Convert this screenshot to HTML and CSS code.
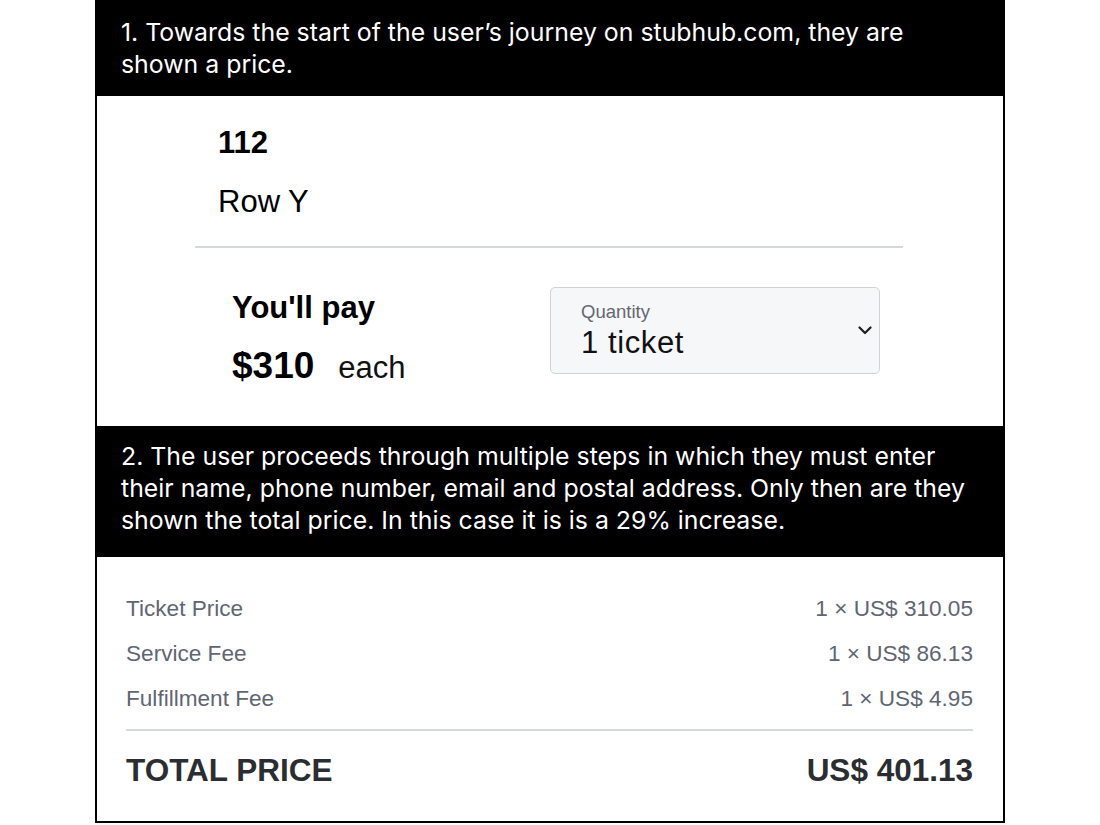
FILE: index.html
```html
<!DOCTYPE html>
<html lang="en">
<head>
<meta charset="utf-8">
<title>StubHub drip pricing</title>
<link rel="stylesheet" href="styles.css">
</head>
<body>
<main class="card">
  <header class="caption caption-first">
    1. Towards the start of the user’s journey on stubhub.com, they are<br>shown a price.
  </header>

  <section class="listing">
    <div class="listing-inner">
      <div class="section-no">112</div>
      <div class="row-name">Row Y</div>
      <div class="divider"></div>
      <div class="price-row">
        <div class="pay">
          <div class="pay-label">You'll pay</div>
          <div class="pay-amount"><span class="amount">$310</span><span class="each">each</span></div>
        </div>
        <div class="quantity">
          <div class="quantity-text">
            <div class="quantity-label">Quantity</div>
            <div class="quantity-value">1 ticket</div>
          </div>
          <svg class="chevron" width="14" height="9" viewBox="0 0 14 9" aria-hidden="true">
            <polyline points="1.5,1.5 7,7 12.5,1.5" fill="none" stroke="#1e1e1e" stroke-width="2.2" stroke-linecap="round" stroke-linejoin="round"/>
          </svg>
        </div>
      </div>
    </div>
  </section>

  <header class="caption caption-second">
    2. The user proceeds through multiple steps in which they must enter<br>their name, phone number, email and postal address. Only then are they<br>shown the total price. In this case it is is a 29% increase.
  </header>

  <section class="summary">
    <div class="fee-row"><span>Ticket Price</span><span>1 × US$ 310.05</span></div>
    <div class="fee-row"><span>Service Fee</span><span>1 × US$ 86.13</span></div>
    <div class="fee-row"><span>Fulfillment Fee</span><span>1 × US$ 4.95</span></div>
    <div class="summary-divider"></div>
    <div class="total-row"><span>TOTAL PRICE</span><span>US$ 401.13</span></div>
  </section>
</main>
</body>
</html>
```

FILE: styles.css
```css
* {
  box-sizing: border-box;
}

html, body {
  margin: 0;
  padding: 0;
  background: #ffffff;
}

.card {
  width: 910px;
  margin-left: 95px;
  border: 2px solid #000000;
  border-top: none;
  background: #ffffff;
  font-family: "Liberation Sans", Arial, sans-serif;
}

.caption {
  background: #000000;
  color: #ffffff;
  font-family: Inter, "Noto Sans", sans-serif;
  font-size: 24.85px;
  line-height: 32px;
  margin: 0 -2px;
  padding-left: 26px;
  padding-right: 8px;
  white-space: nowrap;
}

.caption-first {
  height: 96px;
  padding-top: 16px;
}

.caption-second {
  height: 131px;
  padding-top: 14px;
}

/* Listing */
.listing {
  height: 330px;
  padding-top: 29px;
}

.listing-inner {
  margin-left: 98px;
  width: 708px;
}

.section-no {
  padding-left: 23px;
  font-size: 31px;
  font-weight: bold;
  line-height: 36px;
  color: #000;
}

.row-name {
  padding-left: 23px;
  margin-top: 23px;
  font-size: 31px;
  line-height: 36px;
  color: #000;
}

.divider {
  margin-top: 26px;
  height: 2px;
  background: #d6d9db;
}

.price-row {
  margin-top: 39px;
  display: flex;
  align-items: flex-start;
  padding-left: 37px;
  padding-right: 23px;
}

.pay {
  padding-top: 3px;
}

.pay-label {
  font-size: 31px;
  font-weight: bold;
  line-height: 36px;
  color: #000;
}

.pay-amount {
  margin-top: 18px;
  display: flex;
  align-items: baseline;
  gap: 24px;
  line-height: 44px;
}

.amount {
  font-size: 37px;
  font-weight: bold;
  color: #000;
}

.each {
  font-size: 31px;
  color: #111;
}

.quantity {
  margin-left: auto;
  width: 330px;
  height: 87px;
  border: 1px solid #cfd3d6;
  border-radius: 5px;
  background: #f6f7f9;
  display: flex;
  align-items: center;
  padding-left: 30px;
  padding-right: 7px;
}

.quantity-text {
  flex: 1;
  padding-bottom: 2px;
}

.quantity-label {
  font-size: 18.5px;
  line-height: 24px;
  color: #646870;
}

.quantity-value {
  margin-top: 2px;
  font-size: 31px;
  letter-spacing: 0.6px;
  line-height: 34px;
  color: #111;
}

.chevron {
  display: block;
  margin-top: -1px;
}

/* Summary */
.summary {
  padding: 29px 30px 31px 29px;
}

.fee-row {
  display: flex;
  justify-content: space-between;
  font-size: 22.6px;
  line-height: 45px;
  color: #5f6673;
}

.summary-divider {
  margin-top: 8px;
  height: 2px;
  background: #d6d9db;
}

.total-row {
  margin-top: 19px;
  display: flex;
  justify-content: space-between;
  font-size: 31.5px;
  font-weight: bold;
  line-height: 40px;
  color: #2b2d31;
}
```
